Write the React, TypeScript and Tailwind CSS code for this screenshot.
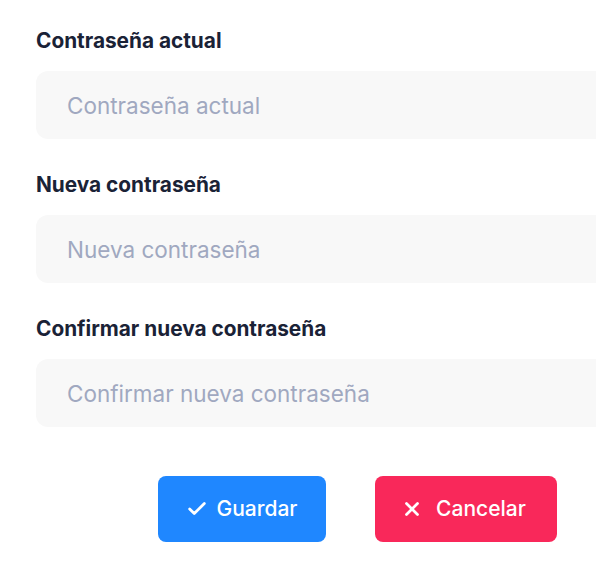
import { Check, X } from "lucide-react";

const fields = [
  { label: "Contraseña actual", placeholder: "Contraseña actual" },
  { label: "Nueva contraseña", placeholder: "Nueva contraseña" },
  { label: "Confirmar nueva contraseña", placeholder: "Confirmar nueva contraseña" },
];

export default function App() {
  return (
    <div className="h-[572px] w-[596px] overflow-hidden bg-white font-['Inter',sans-serif]">
      <form className="w-[679px] pl-9 pt-[27px]">
        {fields.map((f) => (
          <div key={f.label} className="mb-8">
            <label className="mb-4 block text-[20.8px] leading-7 font-bold text-[#1a2236]">{f.label}</label>
            <input
              type="password"
              placeholder={f.placeholder}
              className="block h-[68px] w-full rounded-xl bg-[#f8f8f8] px-[31px] text-[22.5px] text-[#2d3748] outline-none placeholder:text-[#a0a8c0]"
            />
          </div>
        ))}
        <div className="mt-[49px] flex justify-center gap-[49px]">
          <button
            type="button"
            className="flex h-[66px] w-[168px] items-center justify-center gap-2 rounded-lg bg-[#1f87ff] text-[21px] font-medium text-white"
          >
            <Check className="h-[22px] w-[22px]" strokeWidth={3} />
            Guardar
          </button>
          <button
            type="button"
            className="flex h-[66px] w-[182px] items-center justify-center gap-[13px] rounded-lg bg-[#f9285a] pr-[5px] text-[21px] font-medium text-white"
          >
            <X className="h-[22px] w-[22px]" strokeWidth={3} />
            Cancelar
          </button>
        </div>
      </form>
    </div>
  );
}
